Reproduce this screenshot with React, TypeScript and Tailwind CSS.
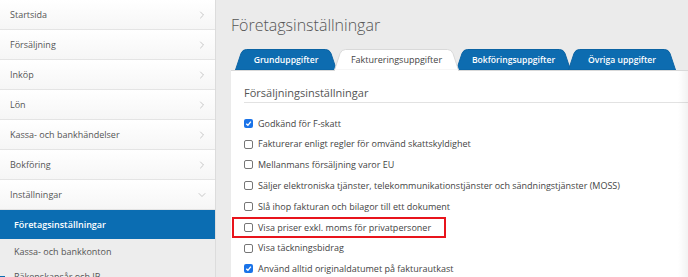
import { ChevronRight, ChevronDown } from 'lucide-react'

const menu = ['Startsida', 'Försäljning', 'Inköp', 'Lön', 'Kassa- och bankhändelser', 'Bokföring']

const options = [
  { label: 'Godkänd för F-skatt', checked: true },
  { label: 'Fakturerar enligt regler för omvänd skattskyldighet', checked: false },
  { label: 'Mellanmans försäljning varor EU', checked: false },
  {
    label: 'Säljer elektroniska tjänster, telekommunikationstjänster och sändningstjänster (MOSS)',
    checked: false
  },
  { label: 'Slå ihop fakturan och bilagor till ett dokument', checked: false },
  { label: 'Visa priser exkl. moms för privatpersoner', checked: false, marked: true },
  { label: 'Visa täckningsbidrag', checked: false },
  { label: 'Använd alltid originaldatumet på fakturautkast', checked: true }
]

const tabs = [
  { name: 'Grunduppgifter', w: 102 },
  { name: 'Faktureringsuppgifter', w: 125, active: true },
  { name: 'Bokföringsuppgifter', w: 115 },
  { name: 'Övriga uppgifter', w: 108 }
]

function Tab({ name, w, active }: { name: string; w: number; active?: boolean }) {
  const h = 21
  const d = `M0.5,${h} L6,4.5 Q7.5,0.5 11.5,0.5 L${w - 11.5},0.5 Q${w - 7.5},0.5 ${w - 6},4.5 L${w - 0.5},${h} Z`
  return (
    <div
      className={`relative flex h-[21px] shrink-0 items-center justify-center -mr-[3px] ${active ? 'z-10' : ''}`}
      style={{ width: w }}
    >
      <svg className="absolute inset-0" width={w} height={h + 1} viewBox={`0 0 ${w} ${h + 1}`}>
        <path
          d={d}
          fill={active ? '#ffffff' : '#0d6cb0'}
          stroke={active ? '#d9d9d9' : '#0b63a3'}
          strokeWidth="1"
        />
        {active && <rect x="1" y={h - 0.5} width={w - 2} height="2" fill="#ffffff" />}
      </svg>
      <span
        className={`relative pt-[1px] ${active ? 'text-[9px] text-[#444]' : 'text-[8.6px] font-semibold text-white'}`}
      >
        {name}
      </span>
    </div>
  )
}

function Checkbox({ checked }: { checked: boolean }) {
  return checked ? (
    <span className="flex h-[9px] w-[9px] shrink-0 items-center justify-center rounded-[2px] bg-[#1a73e8]">
      <svg width="7" height="7" viewBox="0 0 10 10">
        <path d="M1.8 5.2 L4.2 7.6 L8.4 2.4" fill="none" stroke="#fff" strokeWidth="2" />
      </svg>
    </span>
  ) : (
    <span className="h-[9px] w-[9px] shrink-0 rounded-[2px] border border-[#767676] bg-white" />
  )
}

export default function App() {
  return (
    <div
      className="flex h-[277px] w-[688px] overflow-hidden bg-[#ebebeb] text-[#444]"
      style={{ fontFamily: '"Open Sans", "Noto Sans", sans-serif' }}
    >
      <aside className="w-[216px] shrink-0 border-r border-[#dcdcdc] bg-white">
        {menu.map((item) => (
          <div
            key={item}
            className="flex h-[30px] items-center justify-between border-b border-[#e4e4e4] bg-gradient-to-b from-white to-[#f6f6f6] pl-[10px] pr-[7px] text-[9px] text-[#555]"
          >
            {item}
            <ChevronRight size={12} strokeWidth={1.2} className="text-[#a5a5a5]" />
          </div>
        ))}
        <div className="flex h-[30px] items-center justify-between border-b border-[#e4e4e4] bg-gradient-to-b from-white to-[#f6f6f6] pl-[10px] pr-[7px] text-[9px] text-[#555]">
          Inställningar
          <ChevronDown size={12} strokeWidth={1.2} className="text-[#a5a5a5]" />
        </div>
        <div className="flex h-[29px] items-center bg-[#0b6db2] pl-[14px] text-[9px] font-semibold text-white">
          Företagsinställningar
        </div>
        <div className="flex h-[25px] items-center bg-[#ededed] pl-[14px] text-[9px] text-[#555]">
          Kassa- och bankkonton
        </div>
        <div className="relative flex h-[25px] items-center bg-[#ededed] pl-[14px] text-[9px] text-[#555]">
          <span className="absolute left-0 top-[12px] h-[2px] w-[5px] bg-[#0b6db2]" />
          Räkenskapsår och IB
        </div>
      </aside>

      <main className="flex min-w-0 flex-1 flex-col pl-[15px]">
        <h1 className="pt-[13px] text-[16px] font-light leading-[24px] text-[#555]">
          Företagsinställningar
        </h1>
        <div className="mt-[12px] flex pl-[4px]">
          {tabs.map((t) => (
            <Tab key={t.name} {...t} />
          ))}
        </div>
        <section className="relative flex-1 border-t border-[#d9d9d9] bg-white pl-[13px] pt-[15px]">
          <span className="absolute right-0 top-0 h-full w-[10px] bg-gradient-to-r from-transparent to-black/5" />
          <h2 className="border-b border-[#e2e2e2] pb-[2px] text-[11px] leading-[14px] text-[#555]">
            Försäljningsinställningar
          </h2>
          <div className="pt-[10px]">
            {options.map((o) => (
              <div
                key={o.label}
                className="relative flex h-[20.8px] items-center gap-[5px] whitespace-nowrap text-[9px] text-[#444]"
              >
                {o.marked && (
                  <span className="absolute -left-[12px] top-[0px] h-[21px] w-[214px] border-2 border-[#e8141c]" />
                )}
                <Checkbox checked={o.checked} />
                <span>{o.label}</span>
              </div>
            ))}
          </div>
        </section>
      </main>
    </div>
  )
}
